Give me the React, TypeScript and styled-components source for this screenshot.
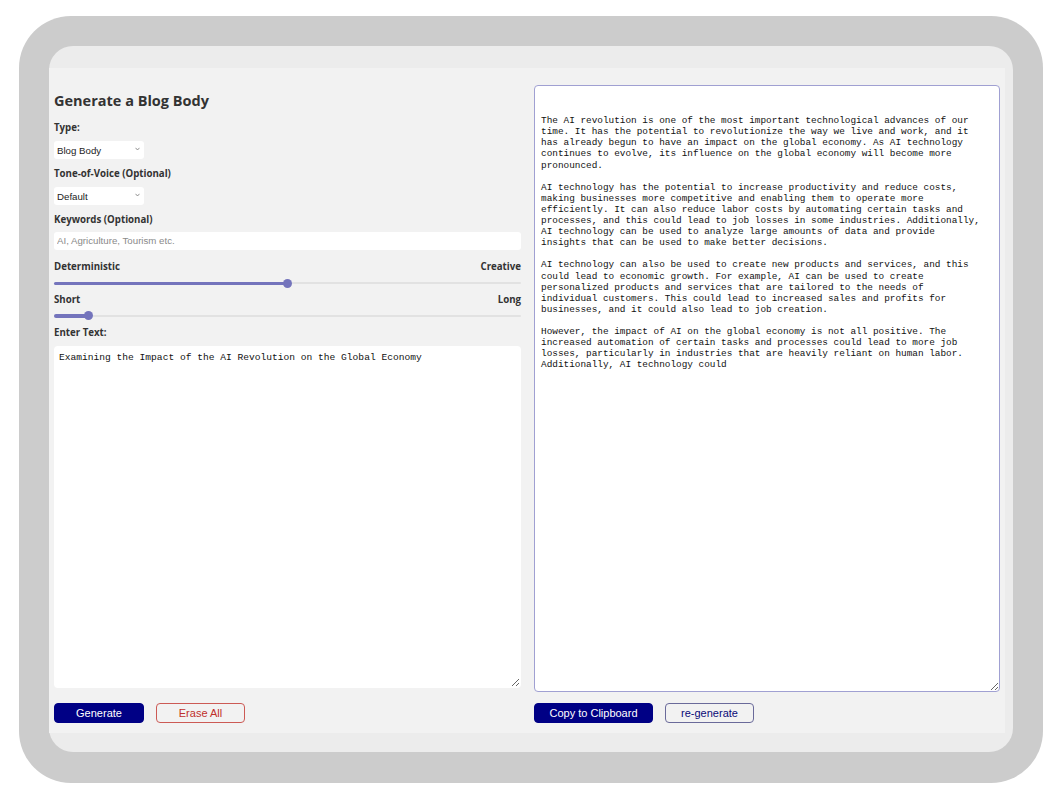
import React from "react";
import styled, { createGlobalStyle } from "styled-components";

const Global = createGlobalStyle`
  html, body { margin: 0; padding: 0; background: #ffffff; }
  * { box-sizing: border-box; }
`;

const Device = styled.div`
  margin: 16px 0 0 19px;
  width: 1024px;
  height: 767px;
  background: #cccccc;
  border-radius: 52px;
  padding: 30px 30px 31px 30px;
`;

const Screen = styled.div`
  height: 100%;
  background: #ececec;
  border-radius: 24px;
  padding: 22px 8px 19px 0;
`;

const Content = styled.div`
  height: 100%;
  background: #f2f2f2;
  display: grid;
  grid-template-columns: 467px 466px;
  column-gap: 13px;
  padding: 0 5px;
`;

const Column = styled.div<{ $top: number }>`
  display: flex;
  flex-direction: column;
  padding-top: ${(p) => p.$top}px;
  min-height: 0;
`;

const Heading = styled.h1`
  margin: 0 0 11px 0;
  font-family: "Open Sans", sans-serif;
  font-weight: 700;
  font-size: 14.5px;
  line-height: 19px;
  color: #333333;
`;

const Label = styled.div<{ $mb?: number }>`
  font-family: "Open Sans", sans-serif;
  font-weight: 700;
  font-size: 9.7px;
  line-height: 13px;
  color: #333333;
  margin-bottom: ${(p) => p.$mb ?? 5.5}px;
`;

const LabelRow = styled.div<{ $mb?: number }>`
  display: flex;
  justify-content: space-between;
  margin-bottom: ${(p) => p.$mb ?? 5}px;
`;

const SelectWrap = styled.div`
  position: relative;
  width: 90px;
  height: 18px;
  margin-bottom: 9.5px;
`;

const Select = styled.select`
  appearance: none;
  -webkit-appearance: none;
  width: 100%;
  height: 100%;
  border: none;
  border-radius: 3px;
  background: #ffffff;
  font-family: "Liberation Sans", Arial, sans-serif;
  font-size: 9.7px;
  color: #222222;
  padding: 0 0 0 3px;
  outline: none;
`;

const Chevron = styled.svg`
  position: absolute;
  right: 4px;
  top: 7px;
  pointer-events: none;
`;

const TextInput = styled.input`
  width: 100%;
  height: 18px;
  border: none;
  border-radius: 3px;
  background: #ffffff;
  font-family: "Liberation Sans", Arial, sans-serif;
  font-size: 9.7px;
  color: #222222;
  padding: 0 0 0 3px;
  margin-bottom: 10.5px;
  outline: none;
  &::placeholder { color: #8a8a8a; }
`;

const SliderTrack = styled.div<{ $mb: number }>`
  position: relative;
  height: 10px;
  margin-bottom: ${(p) => p.$mb}px;
  &::before {
    content: "";
    position: absolute;
    left: 0;
    right: 0;
    top: 4px;
    height: 2px;
    border-radius: 1px;
    background: #e2e2e2;
  }
`;

const SliderFill = styled.div`
  position: absolute;
  left: 0;
  top: 3.5px;
  height: 3.5px;
  border-radius: 2px;
  background: #7474bc;
`;

const SliderThumb = styled.div`
  position: absolute;
  top: 0.5px;
  width: 9px;
  height: 9px;
  margin-left: -4.5px;
  border-radius: 50%;
  background: #7474bc;
`;

const TextArea = styled.textarea<{ $fs: number; $border: string; $pad: string }>`
  flex: 1;
  width: 100%;
  resize: both;
  background: #ffffff;
  border: 1px solid ${(p) => p.$border};
  border-radius: 4px;
  padding: ${(p) => p.$pad};
  font-family: "Liberation Mono", "Courier New", monospace;
  font-size: ${(p) => p.$fs}px;
  line-height: 11.1px;
  color: #111111;
  outline: none;
  overflow: hidden;
  white-space: pre;
`;

const ButtonRow = styled.div<{ $mt: number }>`
  display: flex;
  gap: 12px;
  margin-top: ${(p) => p.$mt}px;
  margin-bottom: 10px;
`;

const Button = styled.button<{ $variant: "solid" | "danger" | "outline"; $w: number }>`
  width: ${(p) => p.$w}px;
  height: 20px;
  border-radius: 4px;
  font-family: "Liberation Sans", Arial, sans-serif;
  font-size: 11px;
  padding: 0;
  cursor: pointer;
  background: ${(p) => (p.$variant === "solid" ? "#000085" : "transparent")};
  color: ${(p) =>
    p.$variant === "solid" ? "#ffffff" : p.$variant === "danger" ? "#c0302b" : "#0a0a78"};
  border: 1px solid
    ${(p) =>
      p.$variant === "solid" ? "#000085" : p.$variant === "danger" ? "#cc5a55" : "#6a6a9a"};
`;

const Slider: React.FC<{ value: number; mb: number }> = ({ value, mb }) => {
  const width = 467;
  const pos = 4.5 + value * (width - 9);
  return (
    <SliderTrack $mb={mb}>
      <SliderFill style={{ width: pos }} />
      <SliderThumb style={{ left: pos }} />
    </SliderTrack>
  );
};

const ChevronIcon = () => (
  <Chevron width="5" height="4" viewBox="0 0 5 4">
    <path d="M0.5 0.8 L2.5 3 L4.5 0.8" fill="none" stroke="#777" strokeWidth="0.8" />
  </Chevron>
);

const OUTPUT = `

The AI revolution is one of the most important technological advances of our
time. It has the potential to revolutionize the way we live and work, and it
has already begun to have an impact on the global economy. As AI technology
continues to evolve, its influence on the global economy will become more
pronounced.

AI technology has the potential to increase productivity and reduce costs,
making businesses more competitive and enabling them to operate more
efficiently. It can also reduce labor costs by automating certain tasks and
processes, and this could lead to job losses in some industries. Additionally,
AI technology can be used to analyze large amounts of data and provide
insights that can be used to make better decisions.

AI technology can also be used to create new products and services, and this
could lead to economic growth. For example, AI can be used to create
personalized products and services that are tailored to the needs of
individual customers. This could lead to increased sales and profits for
businesses, and it could also lead to job creation.

However, the impact of AI on the global economy is not all positive. The
increased automation of certain tasks and processes could lead to more job
losses, particularly in industries that are heavily reliant on human labor.
Additionally, AI technology could`;

export default function App() {
  return (
    <>
      <Global />
      <Device>
        <Screen>
          <Content>
            <Column $top={23}>
              <Heading>Generate a Blog Body</Heading>
              <Label>Type:</Label>
              <SelectWrap>
                <Select defaultValue="Blog Body">
                  <option>Blog Body</option>
                </Select>
                <ChevronIcon />
              </SelectWrap>
              <Label>Tone-of-Voice (Optional)</Label>
              <SelectWrap>
                <Select defaultValue="Default">
                  <option>Default</option>
                </Select>
                <ChevronIcon />
              </SelectWrap>
              <Label>Keywords (Optional)</Label>
              <TextInput placeholder="AI, Agriculture, Tourism etc." />
              <LabelRow>
                <Label $mb={0}>Deterministic</Label>
                <Label $mb={0}>Creative</Label>
              </LabelRow>
              <Slider value={0.5} mb={5} />
              <LabelRow $mb={4.5}>
                <Label $mb={0}>Short</Label>
                <Label $mb={0}>Long</Label>
              </LabelRow>
              <Slider value={0.065} mb={5.5} />
              <Label $mb={6.5}>Enter Text:</Label>
              <TextArea
                $fs={9.6}
                $border="transparent"
                $pad="5px 4px"
                readOnly
                value="Examining the Impact of the AI Revolution on the Global Economy"
              />
              <ButtonRow $mt={15}>
                <Button $variant="solid" $w={90}>Generate</Button>
                <Button $variant="danger" $w={89}>Erase All</Button>
              </ButtonRow>
            </Column>
            <Column $top={17}>
              <TextArea $fs={9.4} $border="#a0a0d2" $pad="7px 6px 6px" readOnly value={OUTPUT} />
              <ButtonRow $mt={11}>
                <Button $variant="solid" $w={119}>Copy to Clipboard</Button>
                <Button $variant="outline" $w={89}>re-generate</Button>
              </ButtonRow>
            </Column>
          </Content>
        </Screen>
      </Device>
    </>
  );
}
